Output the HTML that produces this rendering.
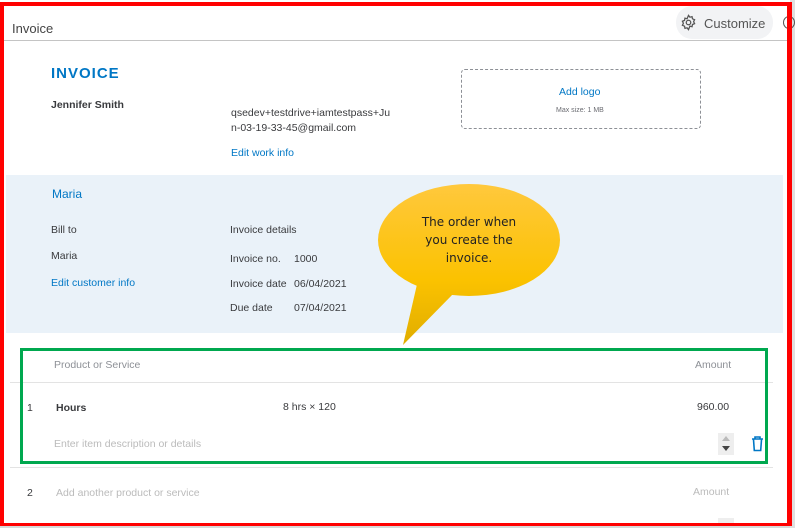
<!DOCTYPE html>
<html><head><style>
*{margin:0;padding:0;box-sizing:border-box}
body{width:795px;height:528px;position:relative;background:#fff;font-family:"Liberation Sans",Arial,sans-serif;overflow:hidden;color:#393a3d}
.a{position:absolute;white-space:nowrap}
.s11{font-size:10.5px}
.blue{color:#0077c5}
</style></head><body>
<div class="a" style="left:0;top:525px;width:795px;height:3px;background:#d8d8d8"></div>
<div class="a" style="left:790px;top:0;width:5px;height:528px;background:#e0e0e0"></div>
<div class="a" style="left:12px;top:21px;font-size:13px;color:#444">Invoice</div>
<div class="a" style="left:4px;top:40px;width:784px;height:1px;background:#c4c4c4"></div>
<div class="a" style="left:676px;top:6px;width:97px;height:33px;border-radius:16px;background:#f2f3f5"></div>
<svg class="a" style="left:680px;top:14px" width="17" height="17" viewBox="0 0 24 24" fill="none" stroke="#555" stroke-width="1.8"><circle cx="12" cy="12" r="3.2"/><path d="M12 2l2 2.5 3-.8.6 3.1 3 1.2-1.4 2.8 1.4 2.8-3 1.2-.6 3.1-3-.8L12 22l-2-2.5-3 .8-.6-3.1-3-1.2L4.8 13 3.4 10.2l3-1.2.6-3.1 3 .8z"/></svg>
<div class="a" style="left:704px;top:16px;font-size:13px;color:#555">Customize</div>
<div class="a" style="left:783px;top:16px;width:12px;height:13px;border:1.5px solid #555;border-radius:50%"></div>
<div class="a" style="left:51px;top:65px;font-size:15px;font-weight:bold;letter-spacing:1px;color:#0077c5">INVOICE</div>
<div class="a s11" style="left:51px;top:99px;font-weight:bold;color:#393a3d">Jennifer Smith</div>
<div class="a s11" style="left:231px;top:106px;line-height:15px">qsedev+testdrive+iamtestpass+Ju<br>n-03-19-33-45@gmail.com</div>
<div class="a s11 blue" style="left:231px;top:147px">Edit work info</div>
<div class="a" style="left:461px;top:69px;width:240px;height:60px;border:1px dashed #8d9096;border-radius:4px"></div>
<div class="a s11 blue" style="left:559px;top:86px">Add logo</div>
<div class="a" style="left:556px;top:107px;font-size:7px;color:#6b6c72">Max size: 1 MB</div>
<div class="a" style="left:6px;top:175px;width:777px;height:158px;background:#eaf2f9"></div>
<div class="a" style="left:52px;top:187px;font-size:12px;color:#0077c5">Maria</div>
<div class="a s11" style="left:51px;top:224px">Bill to</div>
<div class="a s11" style="left:51px;top:250px">Maria</div>
<div class="a s11 blue" style="left:51px;top:277px">Edit customer info</div>
<div class="a s11" style="left:230px;top:224px">Invoice details</div>
<div class="a s11" style="left:230px;top:253px">Invoice no.</div><div class="a s11" style="left:294px;top:253px">1000</div>
<div class="a s11" style="left:230px;top:278px">Invoice date</div><div class="a s11" style="left:294px;top:278px">06/04/2021</div>
<div class="a s11" style="left:230px;top:302px">Due date</div><div class="a s11" style="left:294px;top:302px">07/04/2021</div>
<svg class="a" style="left:370px;top:180px" width="200" height="170">
<defs><linearGradient id="gr" gradientUnits="userSpaceOnUse" x1="0" y1="4" x2="0" y2="165"><stop offset="0" stop-color="#ffc83d"/><stop offset="0.6" stop-color="#fbc200"/><stop offset="1" stop-color="#e0ad00"/></linearGradient></defs>
<path d="M48 100 L33 165 L85 112 Z" fill="url(#gr)"/>
<ellipse cx="99" cy="60" rx="91" ry="56" fill="url(#gr)"/>
</svg>
<div class="a" style="left:378px;top:213px;width:182px;text-align:center;font-family:'DejaVu Sans',sans-serif;font-size:12px;line-height:18px;color:#222;white-space:normal">The order when<br>you create the<br>invoice.</div>
<div class="a s11" style="left:54px;top:359px;color:#8d9096">Product or Service</div>
<div class="a s11" style="left:695px;top:359px;color:#8d9096">Amount</div>
<div class="a" style="left:10px;top:382px;width:763px;height:1px;background:#e3e3e3"></div>
<div class="a s11" style="left:27px;top:402px">1</div>
<div class="a s11" style="left:56px;top:402px;font-weight:bold">Hours</div>
<div class="a s11" style="left:283px;top:401px">8 hrs × 120</div>
<div class="a s11" style="left:697px;top:401px">960.00</div>
<div class="a s11" style="left:54px;top:438px;color:#bbb">Enter item description or details</div>
<div class="a" style="left:718px;top:433px;width:16px;height:22px;background:#eee"></div>
<div class="a" style="left:722px;top:436px;width:0;height:0;border-left:4px solid transparent;border-right:4px solid transparent;border-bottom:5px solid #bbb"></div>
<div class="a" style="left:722px;top:446px;width:0;height:0;border-left:4px solid transparent;border-right:4px solid transparent;border-top:5px solid #444"></div>
<svg class="a" style="left:751px;top:436px" width="13" height="16" viewBox="0 0 13 16" fill="none" stroke="#0077c5" stroke-width="1.6"><path d="M4 2.5V1h5v1.5M1 3h11M2.5 3.5l.8 11h6.4l.8-11"/></svg>
<div class="a" style="left:10px;top:467px;width:763px;height:1px;background:#e3e3e3"></div>
<div class="a s11" style="left:27px;top:487px">2</div>
<div class="a s11" style="left:56px;top:487px;color:#bbb">Add another product or service</div>
<div class="a s11" style="left:693px;top:486px;color:#bbb">Amount</div>
<div class="a" style="left:718px;top:518px;width:16px;height:6px;background:#eee"></div>
<div class="a" style="left:20px;top:348px;width:748px;height:116px;border:3px solid #00a84f"></div>
<div class="a" style="left:0;top:2px;width:792px;height:524px;border-top:4px solid #f00;border-left:4px solid #f00;border-right:5px solid #f00;border-bottom:3px solid #f00"></div>
</body></html>
